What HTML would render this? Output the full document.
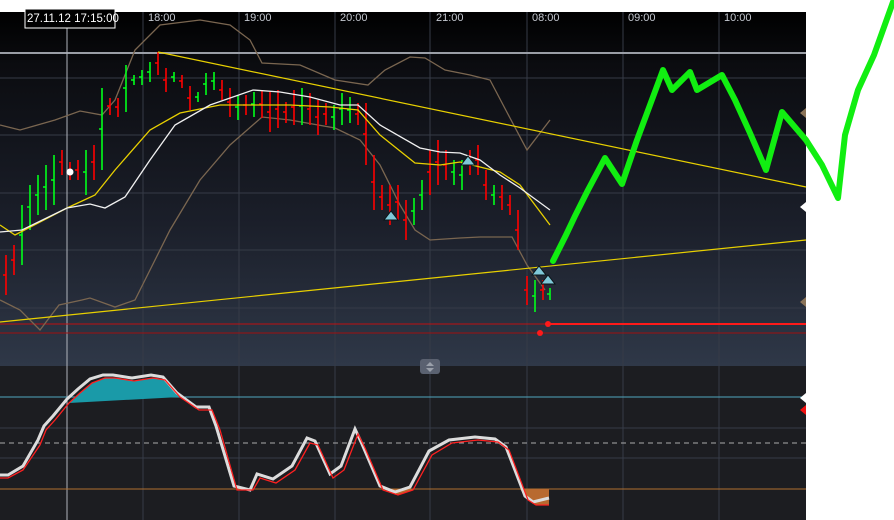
<!DOCTYPE html>
<html><head><meta charset="utf-8"><style>
html,body{margin:0;padding:0;background:#fff;width:894px;height:520px;overflow:hidden}
svg{display:block}
text{font-family:"Liberation Sans",sans-serif}
</style></head><body>
<svg width="894" height="520" viewBox="0 0 894 520" xmlns="http://www.w3.org/2000/svg">
<defs>
<linearGradient id="bg" x1="0" y1="0" x2="0" y2="1">
<stop offset="0" stop-color="#000"/><stop offset="0.15" stop-color="#0b0c10"/><stop offset="0.6" stop-color="#1b1f2a"/><stop offset="1" stop-color="#2f3848"/>
</linearGradient>
</defs>
<rect x="0" y="0" width="894" height="520" fill="#fff"/>
<rect x="0" y="12" width="806" height="354" fill="url(#bg)"/>
<rect x="0" y="366" width="806" height="154" fill="#1c1d21"/>
<g stroke="#363b47" stroke-width="1">
<line x1="143" y1="12" x2="143" y2="520"/><line x1="239" y1="12" x2="239" y2="520"/><line x1="335" y1="12" x2="335" y2="520"/><line x1="430" y1="12" x2="430" y2="520"/><line x1="527" y1="12" x2="527" y2="520"/><line x1="623" y1="12" x2="623" y2="520"/><line x1="719" y1="12" x2="719" y2="520"/>
<line x1="0" y1="78" x2="806" y2="78"/><line x1="0" y1="135" x2="806" y2="135"/><line x1="0" y1="193" x2="806" y2="193"/><line x1="0" y1="250" x2="806" y2="250"/><line x1="0" y1="308" x2="806" y2="308"/>
<line x1="0" y1="428" x2="806" y2="428"/><line x1="0" y1="458" x2="806" y2="458"/>
</g>
<line x1="0" y1="53" x2="806" y2="53" stroke="#9a9ea6" stroke-width="2"/>
<line x1="67" y1="12" x2="67" y2="520" stroke="#b0b4bc" stroke-width="1"/>
<line x1="0" y1="397" x2="806" y2="397" stroke="#4fa8c0" stroke-width="1"/>
<line x1="0" y1="443" x2="806" y2="443" stroke="#aaa" stroke-width="1" stroke-dasharray="5,4"/>
<line x1="0" y1="489" x2="806" y2="489" stroke="#b07030" stroke-width="1"/>
<line x1="0" y1="324" x2="806" y2="324" stroke="#c01010" stroke-width="1"/>
<line x1="548" y1="324" x2="806" y2="324" stroke="#ff1a1a" stroke-width="2"/>
<line x1="0" y1="333" x2="806" y2="333" stroke="#a01010" stroke-width="1"/>
<circle cx="548" cy="324" r="3" fill="#ff1a1a"/><circle cx="540" cy="333" r="3" fill="#ff1a1a"/>
<g fill="none" stroke="#7a6650" stroke-width="1.3">
<polyline points="0,125 20,130 55,120 80,111 102,115 115,100 135,50 160,25 200,20 230,25 250,40 262,63 300,65 335,80 368,85 385,70 410,57 425,58 445,70 470,75 490,80 510,118 527,150 550,120"/>
<polyline points="0,300 20,310 40,330 59,305 82,300 90,298 115,307 135,300 170,230 200,180 230,145 262,117 290,120 335,128 360,140 380,165 400,205 415,230 430,240 460,238 480,237 512,237 527,265 545,290"/>
</g>
<path fill="none" stroke="#ff0000" stroke-width="1.6" d="M6 255V295M3 275H6M14 245V275M11 260H14M62 150V175M59 162H62M70 162V180M67 171H70M78 160V180M75 170H78M94 145V180M91 162H94M110 98V115M107 106H110M118 98V117M115 107H118M158 52V75M155 63H158M166 68V92M163 80H166M182 75V88M179 81H182M190 86V110M187 98H190M222 80V100M219 90H222M230 88V117M227 102H230M246 95V115M243 105H246M262 90V118M259 104H262M270 92V132M267 112H270M278 90V128M275 109H278M286 102V123M283 112H286M294 90V125M291 107H294M310 93V125M307 109H310M318 100V135M315 117H318M326 103V125M323 114H326M358 103V125M355 114H358M366 103V165M363 134H366M374 155V210M371 182H374M382 185V210M379 197H382M390 185V225M387 205H390M398 185V220M395 202H398M406 200V240M403 220H406M430 150V195M427 172H430M438 140V185M435 162H438M446 150V180M443 165H446M470 150V175M467 162H470M478 145V175M475 160H478M486 170V200M483 185H486M502 185V210M499 197H502M510 195V215M507 205H510M518 210V250M515 230H518M527 276V305M524 290H527M543 280V300M540 290H543"/>
<path fill="none" stroke="#00ff1a" stroke-width="1.6" d="M22 205V265M19 235H22M30 185V230M27 207H30M38 175V215M35 195H38M46 165V210M43 187H46M54 155V205M51 180H54M86 150V195M83 172H86M102 88V170M99 129H102M126 65V112M123 88H126M134 75V85M131 80H134M142 70V85M139 77H142M150 62V82M147 72H150M174 72V82M171 77H174M198 92V102M195 97H198M206 73V95M203 84H206M214 72V90M211 81H214M238 95V120M235 107H238M254 92V117M251 104H254M302 88V125M299 106H302M334 105V130M331 117H334M342 93V125M339 109H342M350 97V123M347 110H350M414 198V225M411 211H414M422 180V210M419 195H422M454 160V185M451 172H454M462 160V190M459 175H462M494 185V205M491 195H494M535 280V312M532 296H535M550 288V300M547 294H550"/>
<polyline fill="none" stroke="#e8d000" stroke-width="1.3" points="0,225 15,235 67,208 95,195 115,170 150,130 180,113 220,105 290,105 330,107 358,110 380,135 415,163 440,165 460,162 500,172 520,185 550,225"/>
<polyline fill="none" stroke="#f0f0f0" stroke-width="1.3" points="0,232 22,230 67,208 90,204 105,208 125,197 150,160 175,125 210,105 253,90 280,92 310,97 340,105 358,105 380,125 420,148 440,152 460,153 480,160 500,175 520,188 550,210"/>
<line x1="158" y1="52" x2="806" y2="187" stroke="#e8d000" stroke-width="1.2"/>
<line x1="0" y1="322" x2="806" y2="240" stroke="#e8d000" stroke-width="1.2"/>
<circle cx="70" cy="172" r="3.5" fill="#fff"/>
<g fill="#7fc8d8" stroke="#0a1418" stroke-width="1">
<path d="M384,220 L391,211 L398,220 Z"/><path d="M461,165 L468,156 L475,165 Z"/><path d="M532,275 L539,266 L546,275 Z"/><path d="M541,284 L548,275 L555,284 Z"/>
</g>
<path d="M69,403 L80,393 L92,383 L105,378 L115,378 L134,381 L153,378 L165,380 L180,397 Z" fill="#1a9aa8"/>
<path d="M383,489 L398,495 L413,490 L413,489 Z M520,489 L528,500 L536,505 L549,505 L549,489 Z" fill="#b86a30"/>
<polyline fill="none" stroke="#dcdcdc" stroke-width="3" points="0,475 8,475 23,466 38,440 44,426 53,416 67,399 78,389 90,379 103,375 113,375 132,378 151,375 163,377 177,393 196,407 209,407 216,426 234,486 250,490 257,474 273,479 292,466 307,438 315,441 330,474 341,466 355,429 362,444 380,486 395,492 410,487 429,451 449,440 475,437 495,439 506,447 525,496 533,502 549,498"/>
<polyline fill="none" stroke="#ff2020" stroke-width="1.3" points="0,478 8,478 23,470 40,445 46,430 55,420 69,403 80,393 92,383 105,378 115,378 134,381 153,378 165,380 180,397 199,410 212,410 220,430 237,490 253,490 260,478 276,483 295,470 310,443 318,445 333,478 344,470 358,434 365,448 383,490 398,495 413,490 432,455 452,443 478,440 498,442 509,450 528,500 536,505 549,505"/>
<rect x="420" y="359" width="20" height="15" rx="3" fill="#5a6170"/>
<path d="M426,366 L430,362 L434,366 Z M426,368 L430,372 L434,368 Z" fill="#9aa0aa"/>
<path d="M806,108 L800,113 L806,118 Z" fill="#8a7358"/><path d="M806,297 L800,302 L806,307 Z" fill="#8a7358"/>
<path d="M806,202 L800,207 L806,212 Z" fill="#fff"/><path d="M806,393 L800,398 L806,403 Z" fill="#fff"/><path d="M806,405 L800,410 L806,415 Z" fill="#f01010"/>
<g fill="#c4c8d0" font-size="11">
<text x="148" y="21">18:00</text><text x="244" y="21">19:00</text><text x="340" y="21">20:00</text><text x="436" y="21">21:00</text><text x="532" y="21">08:00</text><text x="628" y="21">09:00</text><text x="724" y="21">10:00</text>
</g>
<rect x="25" y="9" width="90" height="19" fill="#000" stroke="#fff" stroke-width="1"/>
<text x="27" y="22" fill="#fff" font-size="11.5">27.11.12 17:15:00</text>
<polyline fill="none" stroke="#11ee11" stroke-width="6" stroke-linecap="round" stroke-linejoin="round" points="553,261 566,235 575,216 588,190 605,158 622,184 637,140 650,105 663,70 672,90 690,72 697,90 722,75 735,100 750,133 766,170 782,112 806,140 822,165 838,198 845,135 858,90 874,55 893,2"/>
</svg>
</body></html>
